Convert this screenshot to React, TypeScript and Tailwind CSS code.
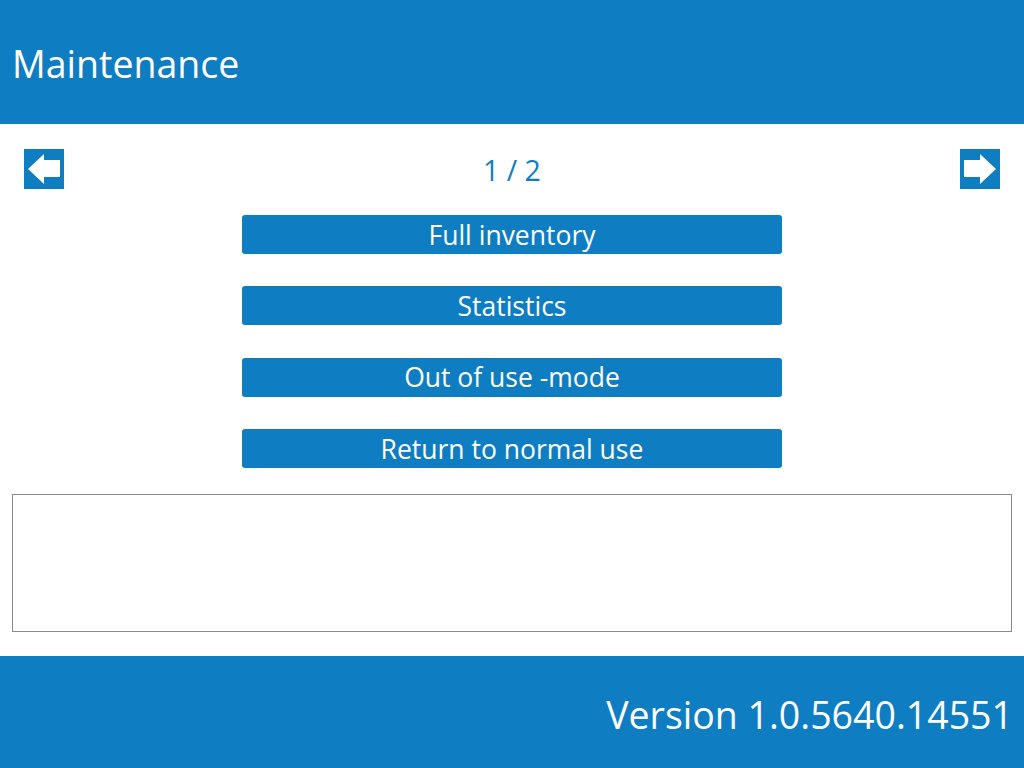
import React from "react";

const buttons = ["Full inventory", "Statistics", "Out of use -mode", "Return to normal use"];

function ArrowBox({ dir }: { dir: "left" | "right" }) {
  return (
    <button className="w-10 h-10 bg-[#0e7dc2] flex items-center justify-center">
      <svg width="40" height="40" viewBox="0 0 40 40" className={dir === "right" ? "-scale-x-100" : ""}>
        <polygon points="4,20 20,5 20,11 36,11 36,28 20,28 20,35" fill="#ffffff" />
      </svg>
    </button>
  );
}

export default function App() {
  return (
    <div className="w-[1024px] h-[768px] flex flex-col bg-white font-['Open_Sans',sans-serif] overflow-hidden">
      <header className="h-[124px] bg-[#0e7dc2] flex items-center px-[12px] shrink-0">
        <h1 className="text-white text-[37.5px] leading-none mt-[4px]">Maintenance</h1>
      </header>

      <div className="flex items-center justify-between px-6 pt-[25px]">
        <ArrowBox dir="left" />
        <span className="text-[#0e7dc2] text-[28.5px] leading-none mt-[2px]">1 / 2</span>
        <ArrowBox dir="right" />
      </div>

      <div className="flex flex-col items-center gap-[32.3px] mt-[26px]">
        {buttons.map((label) => (
          <button
            key={label}
            className="w-[540px] h-[39px] rounded-[3px] bg-[#0e7dc2] text-white text-[26.5px] leading-none flex items-center justify-center pt-[1px]"
          >
            {label}
          </button>
        ))}
      </div>

      <div className="mx-3 mt-[26px] h-[138px] border border-[#8a8a90]"></div>

      <footer className="mt-auto h-[112px] bg-[#0e7dc2] flex items-center justify-end pr-[11px] shrink-0">
        <span className="text-white text-[37.5px] leading-none pt-[6px]">Version 1.0.5640.14551</span>
      </footer>
    </div>
  );
}
